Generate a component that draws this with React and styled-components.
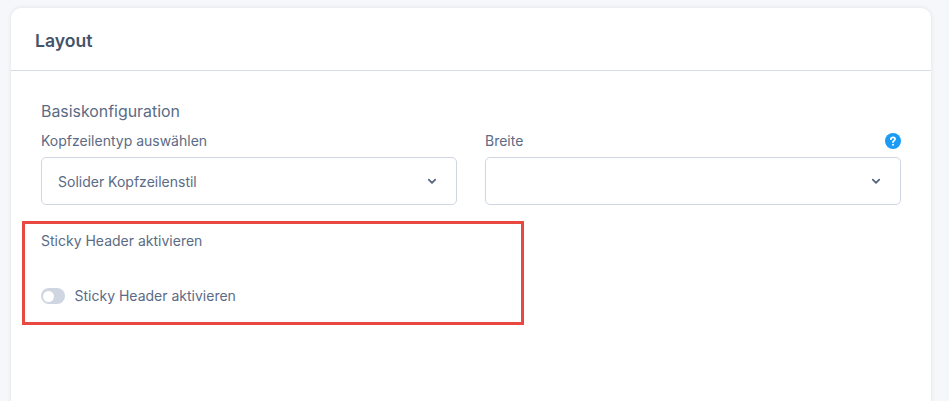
import React from "react";
import styled, { createGlobalStyle } from "styled-components";

const GlobalStyle = createGlobalStyle`
  html, body {
    margin: 0;
    height: 100%;
    overflow: hidden;
    background: #f5f7fa;
  }
  body {
    font-family: Inter, "Liberation Sans", sans-serif;
  }
`;

// Page and card
const Page = styled.div`
  height: 401px;
  padding: 8px 18px 0 11px;
  box-sizing: border-box;
  overflow: hidden;
`;
const Card = styled.section`
  width: 920px;
  height: 480px;
  background: #fff;
  border-radius: 10px;
  box-shadow: 0 0 4px rgba(30, 41, 59, 0.1);
`;
const CardHeader = styled.header`
  height: 58px;
  padding: 4px 0 0 24px;
  display: flex;
  align-items: center;
  border-bottom: 1px solid #d5dce6;
  box-sizing: content-box;
`;
const CardTitle = styled.h2`
  margin: 0;
  font-size: 17.6px;
  font-weight: 600;
  line-height: 24px;
  color: #44546a;
`;
const CardBody = styled.div`
  padding: 29px 30px 0;
`;

// Form parts
const SectionTitle = styled.h3`
  margin: 0;
  font-size: 15.9px;
  font-weight: 400;
  line-height: 24px;
  color: #5b6b85;
`;
const FieldRow = styled.div`
  display: grid;
  grid-template-columns: 416px 416px;
  column-gap: 28px;
  margin-top: 7px;
`;
const LabelRow = styled.div`
  display: flex;
  justify-content: space-between;
  align-items: center;
  height: 20px;
  margin-bottom: 6px;
`;
const Label = styled.label`
  font-size: 14px;
  line-height: 20px;
  color: #5b6b85;
`;
const SelectBox = styled.div`
  height: 48px;
  box-sizing: border-box;
  padding: 0 18px 0 16px;
  display: flex;
  align-items: center;
  justify-content: space-between;
  border: 1px solid #cfd6e1;
  border-radius: 5px;
  background: #fff;
  font-size: 14px;
  color: #5b6b85;
`;
const Chevron = styled.svg`
  width: 12px;
  height: 12px;
  margin-left: auto;
  fill: none;
  stroke: #56657f;
  stroke-width: 1.8;
  stroke-linecap: round;
  stroke-linejoin: round;
`;
const HelpIcon = styled.svg`
  width: 16px;
  height: 16px;
  display: block;
`;

// Highlighted sticky header block
const Highlight = styled.div`
  width: 502px;
  height: 104px;
  box-sizing: border-box;
  margin: 16px 0 0 -19px;
  padding: 6px 16px 0;
  border: 3px solid #e8483f;
`;
const ToggleRow = styled.div`
  display: flex;
  align-items: center;
  gap: 9.5px;
  margin-top: 35px;
`;
const Toggle = styled.span`
  width: 24px;
  height: 16px;
  padding: 2px;
  box-sizing: border-box;
  border-radius: 8px;
  background: #cfd6e1;
  display: flex;
  align-items: center;
`;
const Knob = styled.span`
  width: 11px;
  height: 11px;
  border-radius: 50%;
  background: #fff;
`;

const ChevronIcon = () => (
  <Chevron viewBox="0 0 12 12">
    <path d="M2.8 4.7 6 7.8l3.2-3.1" />
  </Chevron>
);

const App = () => {
  return (
    <>
      <GlobalStyle />
      <Page>
        <Card>
          <CardHeader>
            <CardTitle>Layout</CardTitle>
          </CardHeader>
          <CardBody>
            <SectionTitle>Basiskonfiguration</SectionTitle>
            <FieldRow>
              <div>
                <LabelRow>
                  <Label>Kopfzeilentyp auswählen</Label>
                </LabelRow>
                <SelectBox>
                  Solider Kopfzeilenstil
                  <ChevronIcon />
                </SelectBox>
              </div>
              <div>
                <LabelRow>
                  <Label>Breite</Label>
                  <HelpIcon viewBox="0 0 16 16">
                    <circle cx="8" cy="8" r="8" fill="#1a9bf5" />
                    <path
                      d="M5.9 6.2c0-1.2 1-1.9 2.1-1.9s2.1.7 2.1 1.8c0 1.5-2.1 1.6-2.1 3"
                      fill="none"
                      stroke="#fff"
                      strokeWidth="1.7"
                      strokeLinecap="round"
                    />
                    <circle cx="8" cy="11.7" r="1" fill="#fff" />
                  </HelpIcon>
                </LabelRow>
                <SelectBox>
                  <ChevronIcon />
                </SelectBox>
              </div>
            </FieldRow>
            <Highlight>
              <Label>Sticky Header aktivieren</Label>
              <ToggleRow>
                <Toggle>
                  <Knob />
                </Toggle>
                <Label>Sticky Header aktivieren</Label>
              </ToggleRow>
            </Highlight>
          </CardBody>
        </Card>
      </Page>
    </>
  );
};

export default App;
